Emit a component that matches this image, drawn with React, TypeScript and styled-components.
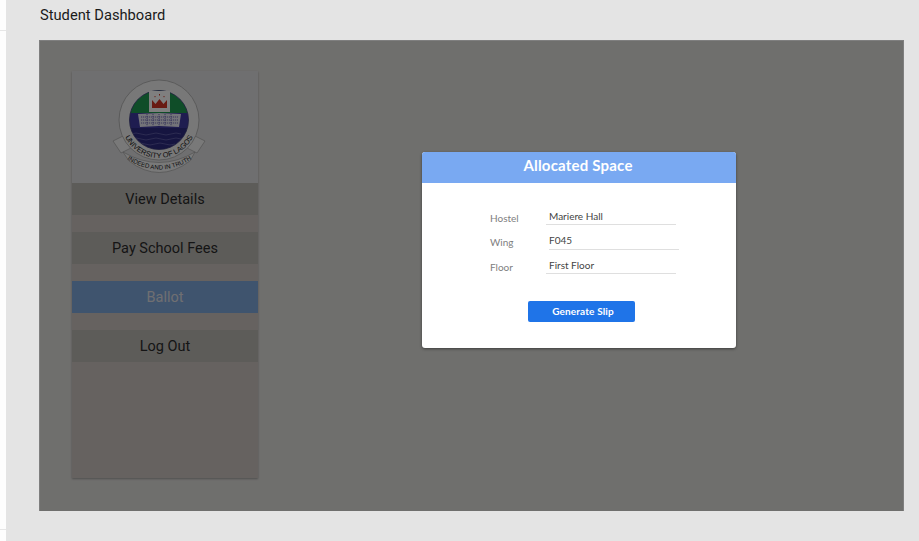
import React from "react";
import styled, { createGlobalStyle } from "styled-components";

const GlobalStyle = createGlobalStyle`
  html, body {
    margin: 0;
    padding: 0;
    height: 100%;
    background: #e4e4e4;
  }
  #root {
    height: 100%;
  }
`;

const Page = styled.div`
  display: flex;
  width: 919px;
  height: 541px;
  overflow: hidden;
  background: #e4e4e4;
  font-family: Roboto, "Liberation Sans", sans-serif;
`;

const Strip = styled.div`
  display: flex;
  flex-direction: column;
  width: 6px;
  background: #fdfdfd;
`;

const StripTop = styled.div`
  height: 30px;
  border-bottom: 1px solid #e6e6e6;
`;

const StripBottom = styled.div`
  margin-top: auto;
  height: 11px;
  border-top: 1px solid #e6e6e6;
`;

const Main = styled.div`
  flex: 1;
  padding-left: 33px;
  padding-right: 15px;
`;

const Title = styled.h1`
  margin: 0;
  height: 40px;
  padding-left: 1px;
  font-size: 14.7px;
  line-height: 31px;
  font-weight: 400;
  color: #1a1a1a;
`;

const Panel = styled.div`
  position: relative;
  box-sizing: border-box;
  height: 471px;
  padding: 30px 0 0 32px;
  background: #dfdedb;
  border: 1px solid #ffffff;
  border-bottom: none;
`;

const Sidebar = styled.aside`
  width: 186px;
  height: 407px;
  background: #cdc5c0;
  box-shadow: 0 1px 2px rgba(0, 0, 0, 0.3);
`;

const LogoBox = styled.div`
  box-sizing: border-box;
  height: 112px;
  padding: 5px 0 0 37px;
  background: #dfdfe0;
`;

const MenuList = styled.nav`
  display: flex;
  flex-direction: column;
  gap: 17px;
`;

const MenuItem = styled.div<{ $active?: boolean }>`
  height: 32px;
  line-height: 33px;
  text-align: center;
  font-size: 14.5px;
  color: ${(p) => (p.$active ? "#dfdfe4" : "#2b2b2b")};
  background: ${(p) => (p.$active ? "#7fa8dc" : "#bab8b3")};
`;

const Overlay = styled.div`
  position: absolute;
  inset: -1px -1px 0 -1px;
  background: rgba(0, 0, 0, 0.5);
`;

const Modal = styled.section`
  position: absolute;
  left: 382px;
  top: 111px;
  width: 314px;
  height: 196px;
  border-radius: 3px;
  overflow: hidden;
  background: #ffffff;
  box-shadow: 0 1px 3px rgba(0, 0, 0, 0.45);
  font-family: Lato, "Open Sans", sans-serif;
`;

const ModalHeader = styled.header`
  height: 31px;
  padding-right: 2px;
  line-height: 27px;
  text-align: center;
  background: #79a9f2;
  color: #ffffff;
  font-size: 15px;
  font-weight: 700;
  letter-spacing: 0.2px;
`;

const Form = styled.div`
  display: flex;
  flex-direction: column;
  padding: 23px 0 0 68px;
`;

const Row = styled.div<{ $height: number }>`
  display: flex;
  align-items: flex-end;
  height: ${(p) => p.$height}px;
`;

const Label = styled.span<{ $lift?: boolean }>`
  width: 56px;
  padding-bottom: ${(p) => (p.$lift ? "1px" : "0")};
  font-size: 10px;
  line-height: 14px;
  color: #808080;
`;

const Value = styled.div<{ $shift?: boolean }>`
  box-sizing: border-box;
  width: 130px;
  height: 18px;
  margin-left: ${(p) => (p.$shift ? "3px" : "0")};
  padding-left: ${(p) => (p.$shift ? "0" : "3px")};
  padding-top: ${(p) => (p.$shift ? "1px" : "2px")};
  font-size: 10px;
  line-height: 14px;
  color: #444444;
  border-bottom: 1px solid #dfdfdf;
`;

const SlipButton = styled.button`
  display: block;
  width: 107px;
  height: 21px;
  margin: 27px 0 0 106px;
  padding: 0 0 1px 3px;
  border: none;
  border-radius: 2px;
  background: #1f74e8;
  color: #ffffff;
  font-family: inherit;
  font-size: 10px;
  font-weight: 700;
  letter-spacing: 0.15px;
`;

const UnilagLogo = () => (
  <svg width="100" height="100" viewBox="0 0 100 100">
    <defs>
      <clipPath id="crest">
        <circle cx="50" cy="44" r="29.5" />
      </clipPath>
      <path id="upper" d="M12 44 A38 38 0 0 0 88 44" />
      <path id="lower" d="M18 83 Q50 104 83 83" />
    </defs>
    <path d="M4 65 L14 60 L22 72 L12 77 Z M96 65 L86 60 L78 72 L88 77 Z" fill="#f2f2f2" stroke="#9a9a9a" strokeWidth="0.6" />
    <circle cx="50" cy="44" r="40" fill="#f0f0f0" stroke="#a8a8a8" strokeWidth="0.8" />
    <path d="M14 76 Q50 97 86 76 L81 85 Q50 108 20 85 Z" fill="#f2f2f2" stroke="#9a9a9a" strokeWidth="0.6" />
    <g clipPath="url(#crest)">
      <rect x="20" y="14" width="60" height="23" fill="#1e9a50" />
      <rect x="20" y="37" width="60" height="15" fill="#3f3aa0" />
      <rect x="20" y="52" width="60" height="24" fill="#2c2a80" />
      <path d="M22 58 q5 -2 10 0 t10 0 t10 0 t10 0 t10 0 M22 63 q5 -2 10 0 t10 0 t10 0 t10 0 t10 0 M26 68 q5 -2 10 0 t10 0 t10 0 t10 0" fill="none" stroke="#8784c4" strokeWidth="0.5" />
    </g>
    <circle cx="50" cy="44" r="29.5" fill="none" stroke="#3a3a78" strokeWidth="0.8" />
    <rect x="40" y="15" width="21" height="21" fill="#ffffff" />
    <path d="M43 24 L46.5 28 L50.5 23 L54.5 28 L58 24 L58 32 L43 32 Z" fill="#d23524" />
    <path d="M50.5 18 v1.5 M46 20 v1.2 M55 20 v1.2" stroke="#d23524" strokeWidth="1" />
    <path d="M29 38 L50 37 L72 38 L70 51 L50 50 L31 51 Z" fill="#e8e8f2" />
    <path d="M32 41 H69 M32 44 H69 M32 47 H69 M38 38 V50 M44 38 V50 M50 38 V50 M56 38 V50 M62 38 V50" stroke="#3f3aa0" strokeWidth="0.7" strokeDasharray="1.2 0.8" fill="none" />
    <text fontFamily="'Liberation Sans', sans-serif" fontSize="7.4" fill="#222222">
      <textPath href="#upper" startOffset="50%" textAnchor="middle">UNIVERSITY OF LAGOS</textPath>
    </text>
    <text fontFamily="'Liberation Sans', sans-serif" fontSize="6.2" fill="#222222">
      <textPath href="#lower" startOffset="50%" textAnchor="middle">INDEED AND IN TRUTH</textPath>
    </text>
  </svg>
);

const App: React.FC = () => {
  return (
    <Page>
      <GlobalStyle />
      <Strip>
        <StripTop />
        <StripBottom />
      </Strip>
      <Main>
        <Title>Student Dashboard</Title>
        <Panel>
          <Sidebar>
            <LogoBox>
              <UnilagLogo />
            </LogoBox>
            <MenuList>
              <MenuItem>View Details</MenuItem>
              <MenuItem>Pay School Fees</MenuItem>
              <MenuItem $active>Ballot</MenuItem>
              <MenuItem>Log Out</MenuItem>
            </MenuList>
          </Sidebar>
          <Overlay />
          <Modal>
            <ModalHeader>Allocated Space</ModalHeader>
            <Form>
              <Row $height={19}>
                <Label>Hostel</Label>
                <Value>Mariere Hall</Value>
              </Row>
              <Row $height={25}>
                <Label $lift>Wing</Label>
                <Value $shift>F045</Value>
              </Row>
              <Row $height={24}>
                <Label>Floor</Label>
                <Value>First Floor</Value>
              </Row>
            </Form>
            <SlipButton>Generate Slip</SlipButton>
          </Modal>
        </Panel>
      </Main>
    </Page>
  );
};

export default App;
